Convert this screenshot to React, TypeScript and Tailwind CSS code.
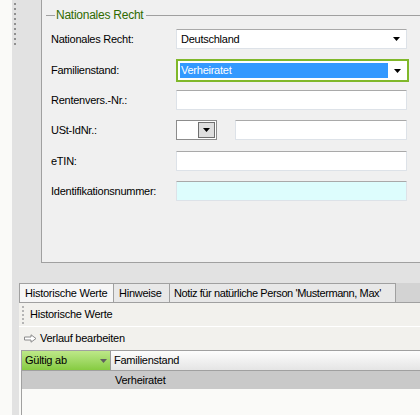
import * as React from 'react';

function Arrow({ className = '' }: { className?: string }) {
  return (
    <svg width="7" height="4" viewBox="0 0 7 4" className={className}>
      <path d="M0 0H7L3.5 4Z" fill="currentColor" />
    </svg>
  );
}

function TextBox({
  className = '',
  bg = 'bg-white',
  children,
}: {
  className?: string;
  bg?: string;
  children?: React.ReactNode;
}) {
  return (
    <div
      className={`h-[20px] border border-[#dde2e8] border-t-[#a9a9a9] rounded-[1px] flex items-center ${bg} ${className}`}
    >
      {children}
    </div>
  );
}

function Row({ label, className = '', children }: { label: string; className?: string; children: React.ReactNode }) {
  return (
    <div className={`flex items-center ${className}`}>
      <div className="w-[134px] shrink-0 pl-[9px] text-black">{label}</div>
      {children}
    </div>
  );
}

export default function App() {
  return (
    <div className="w-[420px] h-[415px] overflow-hidden flex bg-[#fafaf8] text-[11px] leading-none tracking-[-0.25px] font-['Liberation_Sans',Arial,sans-serif] text-black">
      {/* linker heller Rand */}
      <div className="w-[12px] shrink-0 bg-[#fafaf8]" />

      <div className="flex-1 flex flex-col bg-[#e2e2e2]">
        {/* oberer Bereich */}
        <div className="flex h-[263px]">
          <div className="w-[29px] shrink-0 pt-[3px] pl-[2px] flex flex-col gap-[3px]">
            {[...Array(9)].map((_, i) => (
              <div key={i} className="w-[2px] h-[2px] bg-[#8f8f8f]" />
            ))}
          </div>

          <div className="flex-1 bg-[#f0f0f0] border-l border-b border-[#a0a0a0]">
            {/* Gruppentitel */}
            <div className="flex items-center mt-[9px] h-[12px] pl-[4px]">
              <div className="w-[9px] h-px bg-[#a0a0a0]" />
              <span className="px-[1px] text-[#2f6b00] text-[12px]">Nationales Recht</span>
              <div className="flex-1 h-px bg-[#a0a0a0] ml-[2px]" />
            </div>

            <Row label="Nationales Recht:" className="mt-[8px]">
              <TextBox className="w-[231px] pl-[4px] pr-[6px] justify-between">
                <span>Deutschland</span>
                <Arrow />
              </TextBox>
            </Row>

            <Row label="Familienstand:" className="mt-[10px]">
              <div className="w-[233px] h-[23px] border-2 border-[#80b82a] bg-white flex items-center pl-[2px] pr-[6px]">
                <div className="w-[208px] h-[15px] bg-[#3399ff] text-white flex items-center pl-[1px]">Verheiratet</div>
                <div className="flex-1" />
                <Arrow />
              </div>
            </Row>

            <Row label="Rentenvers.-Nr.:" className="mt-[8px]">
              <TextBox className="w-[231px]" />
            </Row>

            <Row label="USt-IdNr.:" className="mt-[10px]">
              <div className="w-[41px] h-[20px] border border-[#8c8c8c] bg-white flex items-center justify-end pr-[1px]">
                <div className="w-[17px] h-[16px] border border-[#6f6f6f] bg-[#dedede] flex items-center justify-center">
                  <Arrow />
                </div>
              </div>
              <TextBox className="w-[172px] ml-[18px]" />
            </Row>

            <Row label="eTIN:" className="mt-[11px]">
              <TextBox className="w-[231px]" />
            </Row>

            <Row label="Identifikationsnummer:" className="mt-[10px]">
              <TextBox className="w-[231px]" bg="bg-[#ddfdfd]" />
            </Row>
          </div>
        </div>

        {/* unterer Bereich */}
        <div className="flex-1 flex flex-col pl-[7px] pt-[20px]">
          {/* Reiter */}
          <div className="flex h-[19px] items-end">
            <div className="w-[95px] h-[19px] flex items-center pl-[5px] bg-[#f6f6f6] border border-b-0 border-[#a0a0a0] whitespace-nowrap">
              Historische Werte
            </div>
            <div className="w-[56px] h-[19px] flex items-center pl-[5px] bg-[#e8e8e8] border-t border-r border-[#a0a0a0] whitespace-nowrap">
              Hinweise
            </div>
            <div className="w-[226px] h-[19px] flex items-center pl-[4px] bg-[#e8e8e8] border-t border-r border-[#a0a0a0] whitespace-nowrap tracking-[-0.4px]">
              Notiz für natürliche Person 'Mustermann, Max'
            </div>
            <div className="flex-1 h-[19px] bg-[#d3d3d3]" />
          </div>

          <div className="flex-1 flex flex-col bg-[#fafaf8] border-t border-[#a0a0a0]">
            {/* Werkzeugleiste */}
            <div className="h-[24px] bg-[#f2f1ed] flex items-center pl-[3px] border-b border-white">
              <div className="flex flex-col gap-[2px] mr-[6px]">
                {[...Array(5)].map((_, i) => (
                  <div key={i} className="w-[2px] h-[2px] bg-[#b5b5b5]" />
                ))}
              </div>
              <span>Historische Werte</span>
            </div>
            <div className="h-[23px] bg-[#f2f1ed] flex items-center pl-[5px]">
              <svg width="13" height="9" viewBox="0 0 13 9" className="mr-[3px]">
                <path d="M0.5 3H7V0.8L12 4.5L7 8.2V6H0.5Z" fill="#ffffff" stroke="#8a8a8a" strokeWidth="1" strokeLinejoin="round" />
              </svg>
              <span>Verlauf bearbeiten</span>
            </div>

            {/* Tabelle */}
            <div className="flex-1 ml-[2px] border-l border-t border-[#a0a0a0] flex flex-col">
              <div className="h-[20px] flex border-b border-[#a0a0a0]">
                <div className="w-[89px] bg-gradient-to-b from-[#bde888] to-[#86cb40] flex items-center pl-[3px] pr-[3px] justify-between border-r border-[#9a9a9a]">
                  <span>Gültig ab</span>
                  <Arrow className="text-[#5f5f5f]" />
                </div>
                <div className="flex-1 bg-gradient-to-b from-[#fdfdfd] to-[#e5e5e5] flex items-center pl-[3px]">
                  Familienstand
                </div>
              </div>
              <div className="h-[18px] bg-[#c9c9c9] flex items-center pl-[93px]">Verheiratet</div>
            </div>
          </div>
        </div>
      </div>
    </div>
  );
}
